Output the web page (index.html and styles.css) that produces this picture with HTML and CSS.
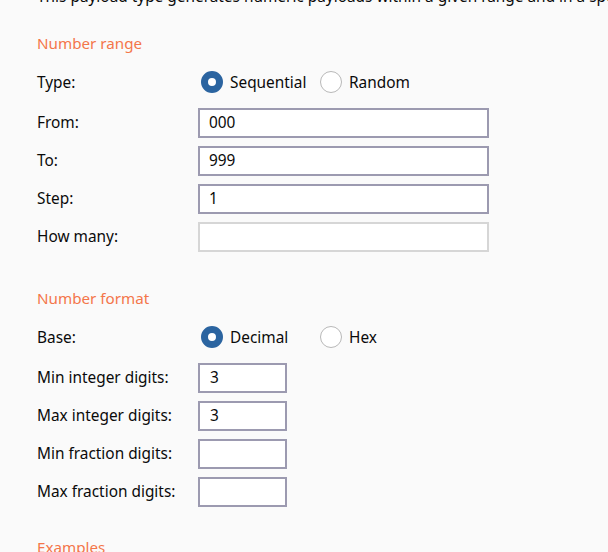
FILE: index.html
```html
<!DOCTYPE html>
<html>
<head>
<meta charset="utf-8">
<link rel="stylesheet" href="styles.css">
</head>
<body>
<div class="page">
  <p class="intro">This payload type generates numeric payloads within a given range and in a specified format.</p>

  <h3 class="section-title first">Number range</h3>
  <div class="form-grid">
    <div class="label">Type:</div>
    <div class="radio-group">
      <span class="option"><span class="radio checked"></span><span>Sequential</span></span>
      <span class="option"><span class="radio"></span><span>Random</span></span>
    </div>

    <div class="label">From:</div>
    <div class="field wide">000</div>

    <div class="label">To:</div>
    <div class="field wide">999</div>

    <div class="label">Step:</div>
    <div class="field wide">1</div>

    <div class="label">How many:</div>
    <div class="field wide disabled"></div>
  </div>

  <h3 class="section-title second">Number format</h3>
  <div class="form-grid">
    <div class="label">Base:</div>
    <div class="radio-group">
      <span class="option"><span class="radio checked"></span><span>Decimal</span></span>
      <span class="option"><span class="radio"></span><span>Hex</span></span>
    </div>

    <div class="label">Min integer digits:</div>
    <div class="field narrow">3</div>

    <div class="label">Max integer digits:</div>
    <div class="field narrow">3</div>

    <div class="label">Min fraction digits:</div>
    <div class="field narrow"></div>

    <div class="label">Max fraction digits:</div>
    <div class="field narrow"></div>
  </div>

  <h3 class="section-title third">Examples</h3>
</div>
</body>
</html>
```

FILE: styles.css
```css
html, body {
  margin: 0;
  padding: 0;
  background: #fafafa;
  overflow: hidden;
}

body {
  font-family: "Noto Sans", "Open Sans", sans-serif;
  font-size: 15.4px;
  color: #0a0a0a;
}

.page {
  padding-left: 37px;
}

.intro {
  margin: -13px 0 0;
  line-height: 20px;
  white-space: nowrap;
}

.section-title {
  margin: 0;
  font-size: 15.2px;
  font-weight: normal;
  line-height: 20px;
  color: #f4764a;
}

.section-title.first { margin-top: 26px; }
.section-title.second { margin-top: 36.5px; }
.section-title.third { margin-top: 30px; }

.form-grid {
  display: grid;
  grid-template-columns: 161px auto;
  row-gap: 8.5px;
  align-items: center;
  margin-top: 14px;
}

.label {
  line-height: 20px;
}

.radio-group {
  display: flex;
  align-items: center;
  height: 30px;
  margin-bottom: 2.5px;
  padding-left: 3px;
}

.option {
  display: flex;
  align-items: center;
  gap: 7px;
  width: 119px;
}

.radio {
  box-sizing: border-box;
  width: 22px;
  height: 22px;
  border-radius: 50%;
  background: #fff;
  border: 1.5px solid #b8b8b8;
  flex: none;
}

.radio.checked {
  border: 7px solid #2b64a0;
}

.field {
  box-sizing: border-box;
  height: 29.5px;
  border: 2px solid #9c9ab0;
  background: #fff;
  padding: 0 9px;
  line-height: 25px;
}

.field.wide { width: 291px; }
.field.narrow { width: 89px; padding-left: 10px; }
.field.disabled { border-color: #d6d6d6; }
```
